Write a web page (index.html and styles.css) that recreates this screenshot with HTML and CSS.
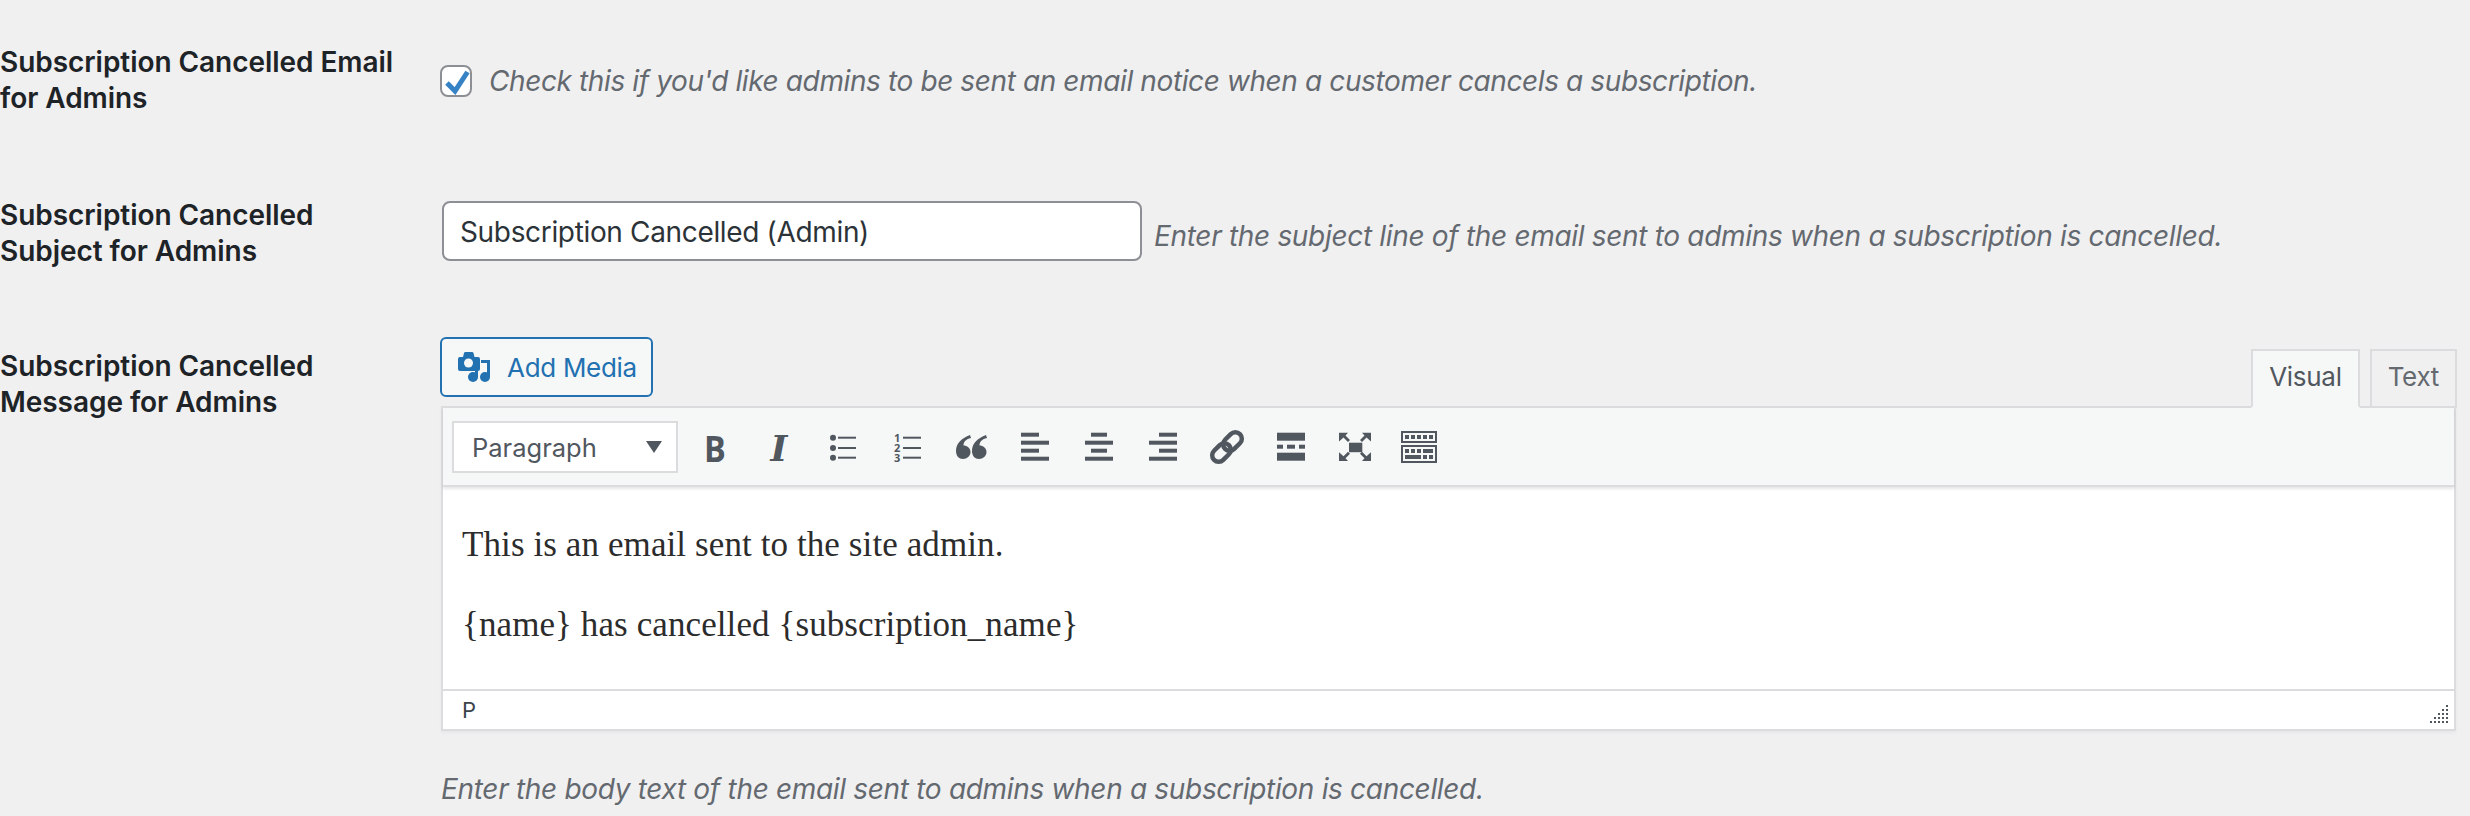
FILE: index.html
```html
<!DOCTYPE html>
<html lang="en">
<head>
<meta charset="utf-8">
<title>Subscription emails</title>
<link rel="stylesheet" href="styles.css">
</head>
<body>
<main class="form">
  <section class="row row-check">
    <h3 class="label">Subscription Cancelled Email for Admins</h3>
    <div class="field">
      <span class="checkbox"><svg viewBox="0 0 32 32" width="32" height="32"><path d="M7 18 L15 26 L27.5 7" fill="none" stroke="#3582c4" stroke-width="5"/></svg></span>
      <em class="desc desc-check">Check this if you'd like admins to be sent an email notice when a customer cancels a subscription.</em>
    </div>
  </section>
  <section class="row row-subject">
    <h3 class="label">Subscription Cancelled Subject for Admins</h3>
    <div class="field">
      <div class="input">Subscription Cancelled (Admin)</div>
      <em class="desc desc-subject">Enter the subject line of the email sent to admins when a subscription is cancelled.</em>
    </div>
  </section>
  <section class="row row-message">
    <h3 class="label">Subscription Cancelled Message for Admins</h3>
    <div class="editor-col">
      <div class="editor-tools">
        <button class="media-btn">
          <svg viewBox="0 0 34 32" width="34" height="32"><path fill="#2271b1" d="M5 6 L6 2 Q6.300 1 7.500 1 H14 Q15.200 1 15.500 2 L16.500 6 H20 Q22 6 22 8 V18 Q22 20 20 20 H2 Q0 20 0 18 V8 Q0 6 2 6 Z"/><circle cx="10.500" cy="12" r="4.500" fill="#f6f7f7"/><circle cx="15" cy="26" r="5" fill="#2271b1"/><circle cx="27" cy="26" r="5" fill="#2271b1"/><path fill="#2271b1" d="M17 18 H20 V26 H17 Z M23 9 H32 V26 H29 V12 H23 Z"/></svg>
          <span>Add Media</span>
        </button>
        <div class="tabs">
          <span class="tab tab-active">Visual</span>
          <span class="tab">Text</span>
        </div>
      </div>
      <div class="editor">
        <div class="toolbar">
          <div class="select"><span>Paragraph</span><i class="caret"></i></div>
          <span class="tb glyph-b">B</span>
          <span class="tb glyph-i">I</span>
          <span class="tb"><svg viewBox="0 0 40 40"><circle cx="10" cy="9.700" r="3"/><circle cx="10" cy="20" r="3"/><circle cx="10" cy="29.700" r="3"/><rect x="15" y="8.700" width="18" height="2"/><rect x="15" y="19" width="18" height="2"/><rect x="15" y="28.700" width="18" height="2"/></svg></span>
          <span class="tb"><svg viewBox="0 0 40 40"><text class="num" x="7" y="13.500">1</text><text class="num" x="7" y="24">2</text><text class="num" x="7" y="34">3</text><rect x="16" y="8.700" width="18" height="2"/><rect x="16" y="19" width="18" height="2"/><rect x="16" y="28.700" width="18" height="2"/></svg></span>
          <span class="tb"><svg viewBox="0 0 40 40"><path d="M19 7 C11 10 5 15 5 23 C5 28 8 31 12 31 C16 31 19.500 28 19.500 24 C19.500 20 16 17.500 12.500 17.500 C12.500 14 15 11 20 10 Z"/><path d="M35 7 C27 10 21 15 21 23 C21 28 24 31 28 31 C32 31 35.500 28 35.500 24 C35.500 20 32 17.500 28.500 17.500 C28.500 14 31 11 36 10 Z"/></svg></span>
          <span class="tb"><svg viewBox="0 0 40 40"><rect x="6" y="4.700" width="18" height="4"/><rect x="6" y="12.700" width="28" height="4"/><rect x="6" y="20.700" width="18" height="4"/><rect x="6" y="28.700" width="28" height="4"/></svg></span>
          <span class="tb"><svg viewBox="0 0 40 40"><rect x="12" y="4.700" width="16" height="4"/><rect x="6" y="12.700" width="28" height="4"/><rect x="12" y="20.700" width="16" height="4"/><rect x="6" y="28.700" width="28" height="4"/></svg></span>
          <span class="tb"><svg viewBox="0 0 40 40"><rect x="16" y="4.700" width="18" height="4"/><rect x="6" y="12.700" width="28" height="4"/><rect x="16" y="20.700" width="18" height="4"/><rect x="6" y="28.700" width="28" height="4"/></svg></span>
          <span class="tb"><svg viewBox="0 0 40 40"><g fill="none" stroke="#50575e" stroke-width="4.500"><rect x="19" y="3" width="13" height="21" rx="6.500" transform="rotate(45 25.500 13.500)"/><rect x="8" y="14" width="13" height="21" rx="6.500" transform="rotate(45 14.500 24.500)"/></g></svg></span>
          <span class="tb"><svg viewBox="0 0 40 40"><rect x="6" y="4.700" width="28" height="8"/><rect x="6" y="16.700" width="6" height="4"/><rect x="16" y="16.700" width="8" height="4"/><rect x="28" y="16.700" width="6" height="4"/><rect x="6" y="24.700" width="28" height="8"/></svg></span>
          <span class="tb"><svg viewBox="0 0 40 40"><rect x="14" y="14.700" width="13.300" height="9.500"/><path d="M4 4.700 H13 L10.500 7.500 L15 12 L13 14 L8.500 9.500 L4 13.500 Z"/><path d="M36 4.700 H27 L29.500 7.500 L25 12 L27 14 L31.500 9.500 L36 13.500 Z"/><path d="M4 33 H13 L10.500 30.200 L15 25.700 L13 23.700 L8.500 28.200 L4 24.200 Z"/><path d="M36 33 H27 L29.500 30.200 L25 25.700 L27 23.700 L31.500 28.200 L36 24.200 Z"/></svg></span>
          <span class="tb"><svg viewBox="0 0 40 40"><rect class="outline" x="3" y="4" width="34" height="10"/><rect x="6" y="7" width="4" height="4"/><rect x="12" y="7" width="4" height="4"/><rect x="18" y="7" width="4" height="4"/><rect x="24" y="7" width="4" height="4"/><rect x="30" y="7" width="4" height="4"/><rect class="outline" x="3" y="18" width="34" height="16"/><rect x="6" y="21" width="4" height="4"/><rect x="12" y="21" width="4" height="4"/><rect x="18" y="21" width="4" height="4"/><rect x="24" y="21" width="10" height="4"/><rect x="6" y="27" width="16" height="4"/><rect x="24" y="27" width="4" height="4"/><rect x="30" y="27" width="4" height="4"/></svg></span>
        </div>
        <div class="content">
          <p>This is an email sent to the site admin.</p>
          <p>{name} has cancelled {subscription_name}</p>
        </div>
        <div class="status">
          <span>P</span>
          <svg class="grip" viewBox="0 0 20 20" width="20" height="20"><g fill="#50575e"><rect x="17" y="1" width="2" height="2"/><rect x="13" y="5" width="2" height="2"/><rect x="17" y="5" width="2" height="2"/><rect x="9" y="9" width="2" height="2"/><rect x="13" y="9" width="2" height="2"/><rect x="17" y="9" width="2" height="2"/><rect x="5" y="13" width="2" height="2"/><rect x="9" y="13" width="2" height="2"/><rect x="13" y="13" width="2" height="2"/><rect x="17" y="13" width="2" height="2"/><rect x="1" y="17" width="2" height="2"/><rect x="5" y="17" width="2" height="2"/><rect x="9" y="17" width="2" height="2"/><rect x="13" y="17" width="2" height="2"/><rect x="17" y="17" width="2" height="2"/></g></svg>
        </div>
      </div>
      <em class="desc desc-message">Enter the body text of the email sent to admins when a subscription is cancelled.</em>
    </div>
  </section>
</main>
</body>
</html>
```
FILE: styles.css
```css
html, body { margin: 0; height: 816px; overflow: hidden; }
body {
  background: #f0f0f0;
  color: #2c3338;
  font-family: Inter, "Noto Sans", "Liberation Sans", sans-serif;
  font-size: 26px;
}
.form { padding: 3px 14px 0 0; }
.row { display: grid; grid-template-columns: 441px 1fr; }
.row-check { height: 153px; }
.row-subject { height: 151px; }
.label {
  margin: 0;
  padding: 41px 40px 0 0;
  font-size: 28px;
  line-height: 36px;
  font-weight: 600;
  color: #1d2327;
  letter-spacing: -0.05px;
}
.field { display: flex; align-items: flex-start; }
.row-check .field { padding-top: 62px; }
.row-subject .field { padding-top: 45px; padding-left: 1px; }
.checkbox {
  box-sizing: border-box;
  width: 32px;
  height: 32px;
  flex: none;
  margin-left: -1px;
  border: 2px solid #8c8f94;
  border-radius: 8px;
  background: #fff;
  display: block;
}
.checkbox svg { display: block; margin: -2px; }
.desc {
  font-size: 28px;
  font-style: italic;
  color: #646970;
  line-height: 36px;
  letter-spacing: -0.32px;
  white-space: nowrap;
}
.desc-check { margin-left: 17px; margin-top: -2px; letter-spacing: -0.39px; }
.desc-subject { margin-left: 12px; margin-top: 17px; }
.desc-message { display: block; margin-top: 40px; }
.input {
  box-sizing: border-box;
  width: 700px;
  height: 60px;
  flex: none;
  border: 2px solid #8c8f94;
  border-radius: 8px;
  background: #fff;
  padding: 2px 16px 0;
  font-size: 28px;
  line-height: 54px;
  letter-spacing: -0.34px;
}
.editor-col { min-width: 0; }
.editor-tools { display: flex; justify-content: space-between; align-items: flex-end; height: 99px; }
.media-btn {
  box-sizing: border-box;
  align-self: flex-start;
  margin: 30px 0 0 -1px;
  width: 213px;
  height: 60px;
  display: flex;
  align-items: center;
  gap: 15px;
  padding: 0 0 0 16px;
  border: 2px solid #2271b1;
  border-radius: 6px;
  background: #f6f7f7;
  color: #2271b1;
  font: inherit;
  letter-spacing: -0.3px;
}
.tabs { display: flex; gap: 10px; margin-bottom: -2px; margin-right: -1px; position: relative; z-index: 1; }
.tab {
  box-sizing: border-box;
  height: 59px;
  padding: 0 16px;
  line-height: 52px;
  border: 2px solid #dcdcde;
  background: #f0f0f0;
  color: #646970;
  letter-spacing: -0.3px;
}
.tab-active { background: #f6f7f7; border-bottom-color: #f6f7f7; color: #50575e; }
.editor { border: 2px solid #dcdcde; background: #fff; box-shadow: 0 2px 3px rgba(0,0,0,.04); }
.toolbar {
  display: flex;
  align-items: center;
  height: 79px;
  padding: 3px 0 0 9px;
  background: #f6f7f7;
  box-shadow: 0 2px 3px rgba(0,0,0,.1);
  border-bottom: 2px solid #dcdcde;
  box-sizing: border-box;
  color: #50575e;
  position: relative;
}
.select {
  box-sizing: border-box;
  width: 226px;
  height: 52px;
  margin: -2px 5px 0 0;
  padding: 0 14px 0 18px;
  display: flex;
  align-items: center;
  justify-content: space-between;
  background: #fff;
  border: 2px solid #dcdcde;
  font-size: 25.500px;
  color: #50575e;
}
.caret {
  width: 0;
  height: 0;
  border-left: 8px solid transparent;
  border-right: 8px solid transparent;
  border-top: 12px solid #50575e;
}
.tb {
  width: 64px;
  height: 40px;
  flex: none;
  display: flex;
  align-items: center;
  justify-content: center;
  fill: #50575e;
}
.tb svg { width: 40px; height: 40px; display: block; }
.glyph-b { font: 700 36px "Open Sans", sans-serif; transform: scaleX(.9); }
.glyph-i { font: italic 700 36px "DejaVu Serif", serif; }
.num { font: 700 11px "Open Sans", sans-serif; }
.outline { fill: none; stroke: #50575e; stroke-width: 2; }
.content {
  height: 202px;
  box-sizing: border-box;
  padding: 38px 19px 0;
  font-family: "Liberation Serif", serif;
  font-size: 35px;
  line-height: 40px;
  color: #2c2c2c;
  letter-spacing: 0.1px;
}
.content p { margin: 0 0 40px; }
.status {
  position: relative;
  border-top: 2px solid #dcdcde;
  height: 38px;
  padding-left: 19px;
  font-size: 22px;
  line-height: 38px;
  color: #3c434a;
}
.grip { position: absolute; right: 5px; bottom: 5px; }
```
